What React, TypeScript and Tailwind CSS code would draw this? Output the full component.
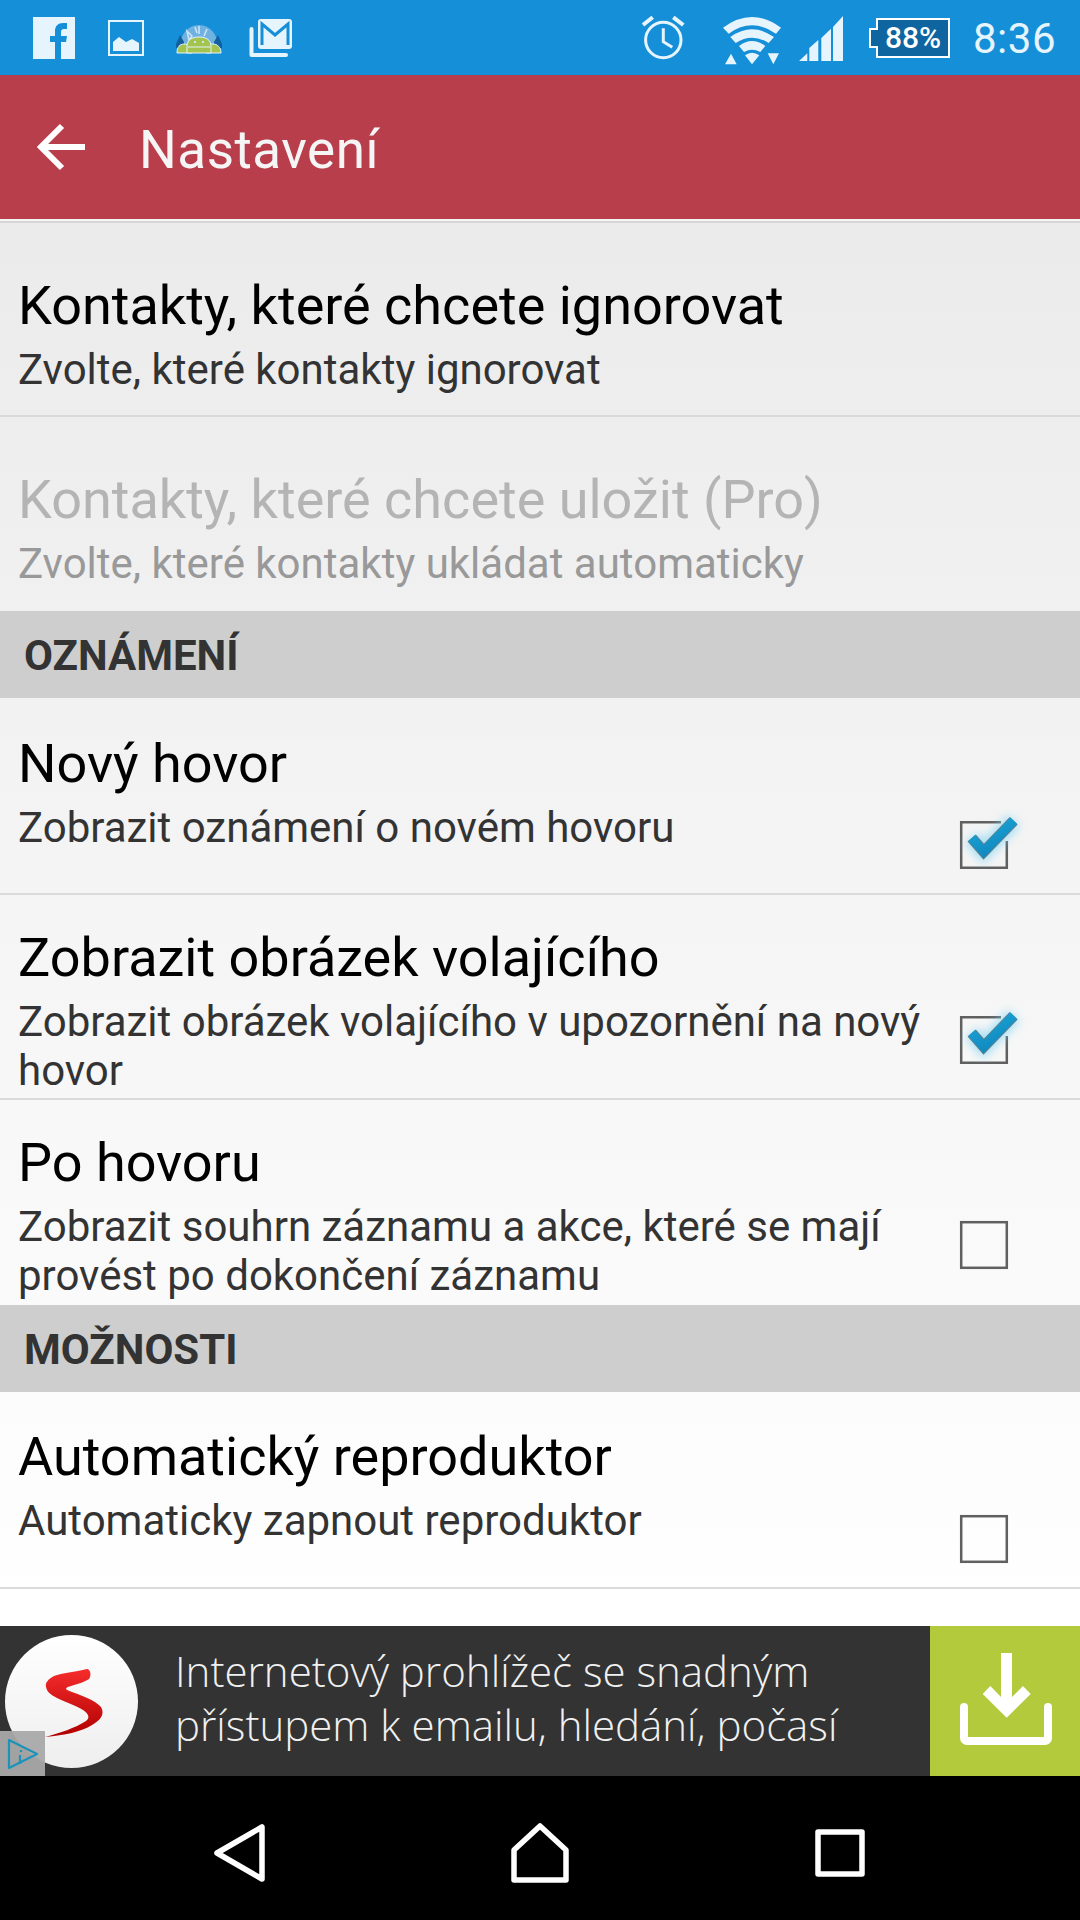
import React from "react";

function Check({ checked, top }: { checked: boolean; top: string }) {
  return (
    <div className={`relative ${top} w-[48px] h-[48px] shrink-0 mr-[72px] ml-[10px]`}>
      <svg className="absolute left-0 top-0 overflow-visible" width="48" height="48" viewBox="0 0 48 48" fill="none">
        <defs>
          <filter id="glow" x="-50%" y="-50%" width="200%" height="200%">
            <feGaussianBlur stdDeviation="5" />
          </filter>
          <linearGradient id="tick" x1="0" y1="0" x2="0.6" y2="1">
            <stop offset="0" stopColor="#1aa8da" />
            <stop offset="1" stopColor="#1189bf" />
          </linearGradient>
        </defs>
        {checked ? (
          <>
            <path d="M41 1.2H1.2V46.8H46.8V20" stroke="#606060" strokeWidth="2.5" />
            <path d="M11.7 17L23.7 30.7L53.7 -0.3" stroke="#7fd4f4" strokeOpacity="0.7" strokeWidth="16" filter="url(#glow)" />
            <path d="M11.7 17L23.7 30.7L53.7 -0.3" stroke="#5d7f8e" strokeWidth="11" />
            <path d="M11.7 17L23.7 30.7L53.7 -0.3" stroke="url(#tick)" strokeWidth="9" />
          </>
        ) : (
          <rect x="1.2" y="1.2" width="45.6" height="45.6" stroke="#606060" strokeWidth="2.5" />
        )}
      </svg>
    </div>
  );
}

function Row({ title, sub, h, pt, check, checkTop = "mt-[123px]", dim, border = true }: { title: string; sub: string; h: string; pt: string; check?: boolean; checkTop?: string; dim?: boolean; border?: boolean }) {
  return (
    <div className={`flex shrink-0 ${h} ${border ? "border-b-2 border-[#dadada]" : ""}`}>
      <div className={`flex-1 pl-[18px] ${pt}`}>
        <div className={`text-[54px] leading-[64px] ${dim ? "text-[#b4b4b4]" : "text-black"}`}>{title}</div>
        <div className={`text-[42px] leading-[49px] mt-[7px] ${dim ? "text-[#999999]" : "text-[#333333]"}`}>{sub}</div>
      </div>
      {check !== undefined && <Check checked={check} top={checkTop} />}
    </div>
  );
}

function Section({ title }: { title: string }) {
  return <div className="h-[87px] shrink-0 bg-[#cecece] pl-[24px] pt-[2px] flex items-center text-[42px] font-bold text-[#333333]">{title}</div>;
}

export default function App() {
  return (
    <div className="w-[1080px] h-[1920px] flex flex-col overflow-hidden bg-black font-['Roboto',sans-serif]">
      <div className="h-[75px] shrink-0 bg-[#168fd9] flex items-center">
        <svg className="ml-[33px]" width="42" height="42" viewBox="0 0 42 42">
          <rect width="42" height="42" fill="#e6f4fd" />
          <path d="M22 42V25h-5v-6h5v-5c0-5 3-8 8-8h4v6h-3c-2 0-3 1-3 3v4h6l-1 6h-5v17z" fill="#168fd9" />
        </svg>
        <svg className="ml-[33px]" width="36" height="36" viewBox="0 0 36 36">
          <rect x="1" y="1" width="34" height="34" fill="none" stroke="#e6f4fd" strokeWidth="2" />
          <path d="M5 31V22L11 17L18 22L24 19L31 23V31z" fill="#e6f4fd" />
        </svg>
        <svg className="ml-[31px]" width="48" height="32" viewBox="0 0 48 32">
          <path d="M5 24a19 21 0 0 1 38 0z" fill="#6fb2e2" />
          <path d="M12 9l5 5-3 4zM24 4v8M32 7l-3 7M20 5l2 6" stroke="#cfe6f6" strokeWidth="1.5" fill="none" />
          <path d="M1 22l4-9 4 7v6H1zM47 22l-4-9-4 7v6h8z" fill="#12609f" />
          <path d="M2 31c0-6 3-9 7-9s8 3 8 9zM31 31c0-6 3-9 7-9s8 3 8 9z" fill="#a4c34f" stroke="#e6f4fd" strokeWidth="1" />
          <path d="M12 31V24c0-6 5-9 12-9s12 3 12 9v7z" fill="#a4c34f" stroke="#e6f4fd" strokeWidth="1" />
          <path d="M13 25h22" stroke="#e6f4fd" strokeWidth="1" />
          <circle cx="20" cy="20" r="1" fill="#e6f4fd" />
          <circle cx="28" cy="20" r="1" fill="#e6f4fd" />
        </svg>
        <svg className="ml-[26px]" width="44" height="40" viewBox="0 0 44 40">
          <path d="M2.5 11v26h34.500" fill="none" stroke="#e6f4fd" strokeWidth="4" strokeLinecap="round" strokeLinejoin="round" />
          <rect x="9" y="1" width="34" height="30" rx="3" fill="#e6f4fd" />
          <path d="M13 27V6l13 11L39 6v21" fill="none" stroke="#168fd9" strokeWidth="3" />
        </svg>
        <svg className="ml-[349px]" width="44" height="44" viewBox="0 0 44 44" fill="none" stroke="#e6f4fd">
          <circle cx="21.300" cy="24" r="17.700" strokeWidth="3" />
          <path d="M21.300 12.300V25.700L30.300 31.300" strokeWidth="3" />
          <path d="M1 9L10.700 1.300M41.300 9L31.300 1.300" strokeWidth="4" />
        </svg>
        <svg className="ml-[37px] mt-[6px]" width="60" height="48" viewBox="0 0 60 48" fill="#e6f4fd">
          <path d="M0 10.700Q29 -10.700 58 10.700L53 16.700Q29 0 5.700 16.700Z" />
          <path d="M7.300 20Q29 4.600 51 20L45.700 26Q29 15.400 12.700 26Z" />
          <path d="M16 29Q29 19 42.300 29L37.300 35Q29 30.400 21 35Z" />
          <path d="M22 38.300Q29 33 36.300 38.300L29 47.300Z" />
          <path d="M2 47.300L8 36.700L13.700 47.300ZM44.700 36.300H56L50.300 47.300Z" />
        </svg>
        <svg className="ml-[15px] mt-[2px]" width="46" height="46" viewBox="0 0 46 46" fill="#e6f4fd">
          <path d="M1 45L9.300 37.300V45ZM11.300 45V32L20.300 24V45ZM23.300 45V22L33 12.700V45ZM35 45V11L45 0V45Z" />
        </svg>
        <div className="ml-[25px] relative w-[81px] h-[40px]">
          <div className="absolute left-[7px] top-0 w-[74px] h-[40px] bg-[#0e659f] border-2 border-white flex items-center justify-center text-white text-[30px] font-medium">88%</div>
          <div className="absolute left-0 top-[10px] w-[9px] h-[20px] bg-[#0e659f] border-2 border-r-0 border-white" />
        </div>
        <div className="ml-[23px] mt-[3px] text-[#e6f4fd] text-[42px] leading-none tracking-[0.5px]">8:36</div>
      </div>
      <div className="h-[144px] shrink-0 bg-[#b93e4b] flex items-center">
        <svg className="ml-[37px]" width="48" height="48" viewBox="0 0 48 48" fill="none" stroke="#ffffff" strokeWidth="6">
          <path d="M48 24H4M25 3L4 24L25 45" />
        </svg>
        <div className="ml-[54px] mt-[8px] text-[53px] text-[#f5f5f5] tracking-[0.5px]">Nastavení</div>
      </div>
      <div className="h-[1407px] shrink-0 flex flex-col bg-gradient-to-b from-[#ebebeb] to-[#ffffff]">
        <div className="h-[2px] shrink-0 bg-[#f4f4f4]" />
        <div className="h-[2px] shrink-0 bg-[#d6d6d6]" />
        <Row title="Kontakty, které chcete ignorovat" sub="Zvolte, které kontakty ignorovat" h="h-[194px]" pt="pt-[51px]" />
        <Row title="Kontakty, které chcete uložit (Pro)" sub="Zvolte, které kontakty ukládat automaticky" h="h-[194px]" pt="pt-[51px]" dim border={false} />
        <Section title="OZNÁMENÍ" />
        <Row title="Nový hovor" sub="Zobrazit oznámení o novém hovoru" h="h-[197px]" pt="pt-[34px]" check />
        <Row title="Zobrazit obrázek volajícího" sub="Zobrazit obrázek volajícího v upozornění na nový hovor" h="h-[205px]" pt="pt-[31px]" check checkTop="mt-[121px]" />
        <Row title="Po hovoru" sub="Zobrazit souhrn záznamu a akce, které se mají provést po dokončení záznamu" h="h-[205px]" pt="pt-[31px]" check={false} checkTop="mt-[121px]" border={false} />
        <Section title="MOŽNOSTI" />
        <Row title="Automatický reproduktor" sub="Automaticky zapnout reproduktor" h="h-[197px]" pt="pt-[33px]" check={false} />
      </div>
      <div className="h-[150px] shrink-0 bg-[#333333] flex items-center relative">
        <div className="w-[133px] h-[133px] ml-[5px] rounded-full bg-gradient-to-b from-[#ffffff] to-[#eeeeee] shrink-0">
          <svg width="133" height="133" viewBox="0 0 133 133">
            <defs>
              <linearGradient id="s" x1="0" y1="0" x2="0" y2="1">
                <stop offset="0" stopColor="#f62c2c" />
                <stop offset="1" stopColor="#b00000" />
              </linearGradient>
            </defs>
            <path d="M82 34C70 37 57 38 49 41C43 44 40 48 41 52C42 57 46 60 52 63C60 67 72 71 78 75C84 79 85 83 81 86C70 93 55 98 40 102C60 100 76 97 87 90C96 85 100 79 96 72C90 65 75 60 62 55C60 53 62 52 66 51C72 49 80 47 84 44C87 40 85 34 82 34Z" fill="url(#s)" />
          </svg>
        </div>
        <div className="ml-[37px] pb-[6px] flex-1 font-['Open_Sans',sans-serif] font-light text-[42px] leading-[54px] text-[#f0f0f0]">
          <div>Internetový prohlížeč se snadným</div>
          <div>přístupem k emailu, hledání, počasí</div>
        </div>
        <div className="w-[150px] h-[150px] bg-[#b3ca3c] shrink-0">
          <svg width="150" height="150" viewBox="0 0 150 150">
            <path d="M71 27H82V71L93 60L100.700 68L76.700 91.700L52.700 68L60.300 60L71 71Z" fill="#ffffff" />
            <path d="M34 81V112a3 3 0 0 0 3 3H115a3 3 0 0 0 3-3V81" fill="none" stroke="#ffffff" strokeWidth="8" strokeLinecap="round" />
          </svg>
        </div>
        <div className="absolute left-0 bottom-0 w-[45px] h-[45px] bg-[#a9a9a9]/95">
          <svg width="45" height="45" viewBox="0 0 45 45" fill="none" stroke="#1c93b8" strokeWidth="2.200">
            <path d="M9 9L37 23L9 37Z" strokeLinejoin="round" />
            <path d="M20 24V33M21 19V21" />
          </svg>
        </div>
      </div>
      <div className="flex-1 flex items-center justify-center pt-[10px]">
        <div className="w-[300px] flex justify-center">
          <svg width="52" height="58" viewBox="0 0 52 58" fill="none" stroke="#ffffff" strokeWidth="5.500" strokeLinejoin="round">
            <path d="M3 29L48 3V55Z" />
          </svg>
        </div>
        <div className="w-[300px] flex justify-center">
          <svg width="58" height="60" viewBox="0 0 58 60" fill="none" stroke="#ffffff" strokeWidth="5.500" strokeLinejoin="round">
            <path d="M3 27L29 3L55 27V57H3Z" />
          </svg>
        </div>
        <div className="w-[300px] flex justify-center">
          <svg width="50" height="48" viewBox="0 0 50 48" fill="none" stroke="#ffffff" strokeWidth="5.500" strokeLinejoin="round">
            <rect x="3" y="3" width="44" height="42" />
          </svg>
        </div>
      </div>
    </div>
  );
}
